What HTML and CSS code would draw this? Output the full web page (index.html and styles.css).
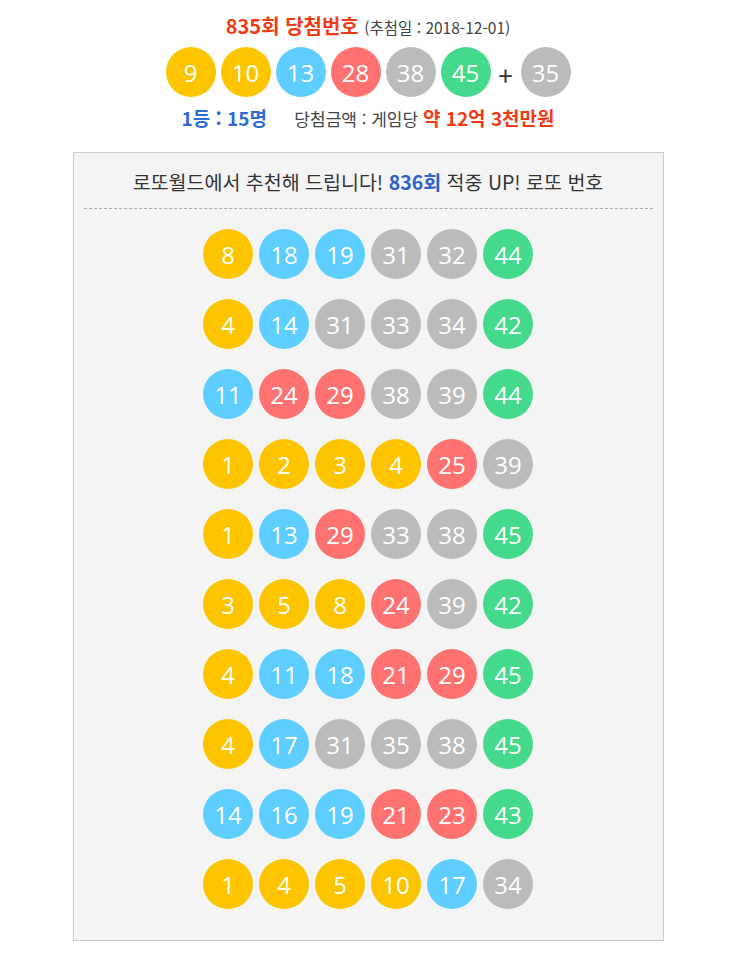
FILE: index.html
```html
<!DOCTYPE html>
<html lang="ko">
<head>
  <meta charset="UTF-8">
  <meta name="viewport" content="width=device-width, initial-scale=1.0">
  <title>로또 당첨번호</title>
  <link rel="stylesheet" href="styles.css">
</head>
<body>

<div class="draw">
  <p class="draw-title"><strong>835회 당첨번호</strong> <span class="draw-date">(추첨일 : 2018-12-01)</span></p>
  <div class="balls">
    <span class="ball yellow">9</span>
    <span class="ball yellow">10</span>
    <span class="ball blue">13</span>
    <span class="ball red">28</span>
    <span class="ball gray">38</span>
    <span class="ball green">45</span>
    <span class="plus">+</span>
    <span class="ball gray">35</span>
  </div>
  <p class="draw-prize">
    <strong class="winners">1등 : 15명</strong>
    <span class="amount">당첨금액 : 게임당 <strong>약 12억 3천만원</strong></span>
  </p>
</div>

<div class="recommend">
  <p class="recommend-title">로또월드에서 추천해 드립니다! <strong>836회</strong> 적중 UP! 로또 번호</p>
  <div class="rows" id="rows"></div>
</div>

<script>
  const sets = [
    [8, 18, 19, 31, 32, 44],
    [4, 14, 31, 33, 34, 42],
    [11, 24, 29, 38, 39, 44],
    [1, 2, 3, 4, 25, 39],
    [1, 13, 29, 33, 38, 45],
    [3, 5, 8, 24, 39, 42],
    [4, 11, 18, 21, 29, 45],
    [4, 17, 31, 35, 38, 45],
    [14, 16, 19, 21, 23, 43],
    [1, 4, 5, 10, 17, 34]
  ];

  function colorOf(n) {
    if (n <= 10) return 'yellow';
    if (n <= 20) return 'blue';
    if (n <= 30) return 'red';
    if (n <= 40) return 'gray';
    return 'green';
  }

  const rows = document.getElementById('rows');

  sets.forEach(set => {
    const row = document.createElement('div');
    row.className = 'balls row';
    set.forEach(n => {
      const ball = document.createElement('span');
      ball.className = 'ball ' + colorOf(n);
      ball.textContent = n;
      row.appendChild(ball);
    });
    rows.appendChild(row);
  });
</script>

</body>
</html>
```

FILE: styles.css
```css
body {
  margin: 0;
  background-color: #fff;
  color: #333;
  font-family: "Noto Sans CJK KR", "Noto Sans", sans-serif;
}

p {
  margin: 0;
}

.draw {
  padding-top: 13px;
  text-align: center;
}

.draw-title {
  font-size: 20px;
  line-height: 26px;
}

.draw-title strong {
  color: #ef3b16;
  font-weight: bold;
}

.draw-date {
  font-size: 15.5px;
  color: #444;
}

.balls {
  display: flex;
  justify-content: center;
  align-items: center;
  gap: 5px;
  margin-top: 7px;
}

.ball {
  width: 50px;
  height: 50px;
  border-radius: 50%;
  display: flex;
  align-items: center;
  justify-content: center;
  color: #fff;
  font-family: "Open Sans", "Noto Sans", sans-serif;
  font-size: 24px;
}

.yellow { background-color: #fcc500; }
.blue { background-color: #5ecdff; }
.red { background-color: #ff7272; }
.gray { background-color: #bbbbbb; }
.green { background-color: #45d98b; }

.plus {
  width: 20px;
  font-size: 26px;
  color: #333;
  padding-top: 4px;
  text-align: center;
}

.draw-prize {
  margin-top: 8px;
  line-height: 26px;
}

.winners {
  color: #2f6bd3;
  font-size: 19px;
  margin-right: 23px;
}

.amount {
  font-size: 17px;
  color: #444;
}

.amount strong {
  color: #ef3b16;
  font-size: 19px;
}

.recommend {
  box-sizing: border-box;
  width: 591px;
  margin: 20px auto 0;
  padding: 0 10px 31px;
  background-color: #f4f4f4;
  border: 1px solid #ccc;
}

.recommend-title {
  padding: 16px 0 13px;
  font-size: 19.5px;
  line-height: 26px;
  text-align: center;
  border-bottom: 1px dashed #aaa;
}

.recommend-title strong {
  color: #2f62c8;
}

.row {
  gap: 6px;
  margin-top: 20px;
}
```
